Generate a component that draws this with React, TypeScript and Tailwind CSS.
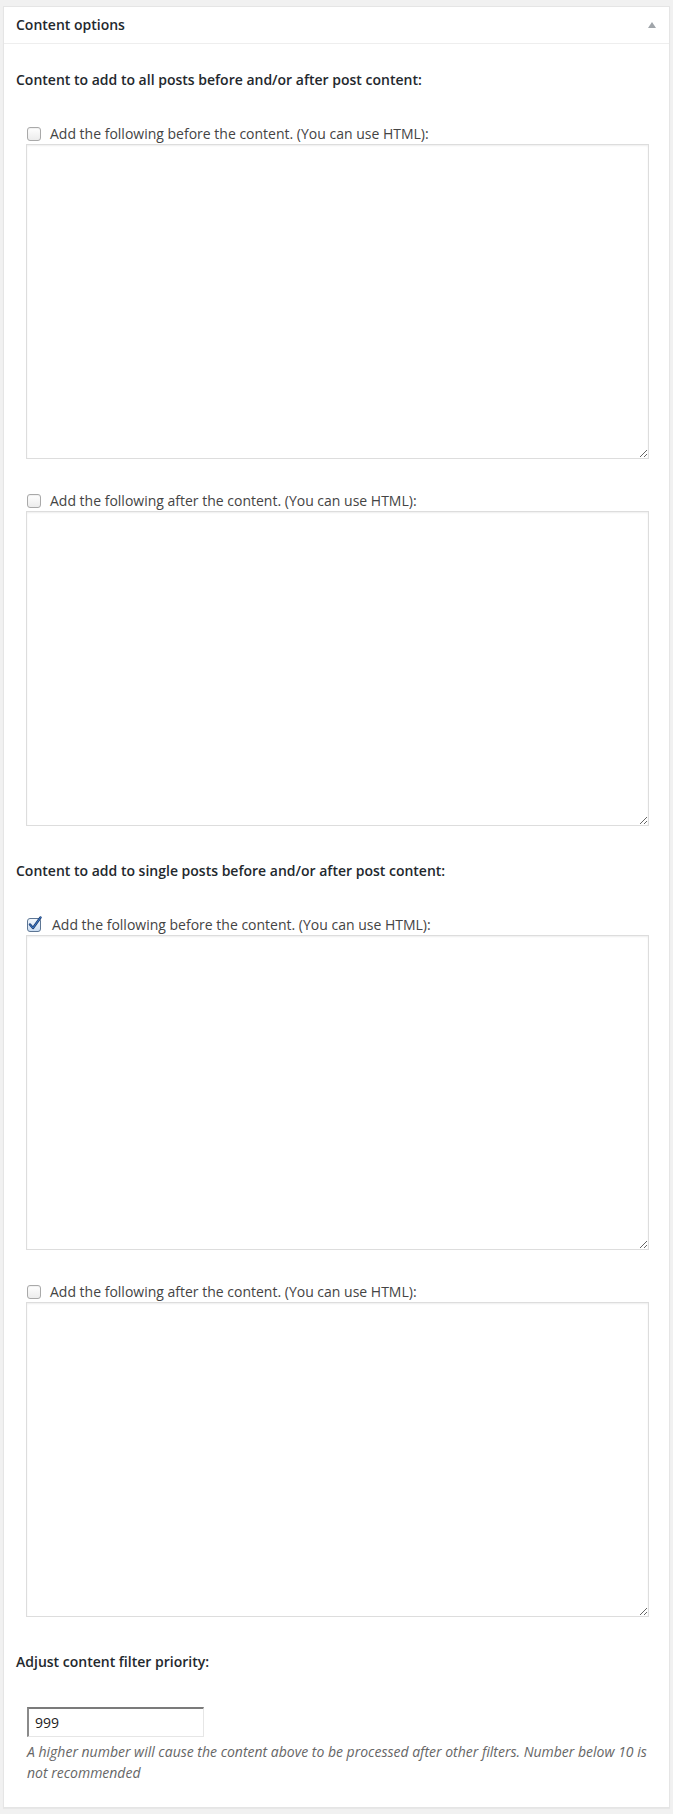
import React from "react";

type Field = { label: string; checked?: boolean };

const allPosts: Field[] = [
  { label: "Add the following before the content. (You can use HTML):" },
  { label: "Add the following after the content. (You can use HTML):" },
];

const singlePosts: Field[] = [
  { label: "Add the following before the content. (You can use HTML):", checked: true },
  { label: "Add the following after the content. (You can use HTML):" },
];

function Checkbox({ checked }: { checked?: boolean }) {
  if (checked) {
    return (
      <svg width="16" height="16" viewBox="0 0 16 16" className="-mt-[3px] shrink-0">
        <defs>
          <linearGradient id="cbfill" x1="0" y1="0" x2="0" y2="1">
            <stop offset="0" stopColor="#f4f8fd" />
            <stop offset="1" stopColor="#c9dcf2" />
          </linearGradient>
        </defs>
        <rect x="0.5" y="2.5" width="13" height="13" rx="2.5" fill="url(#cbfill)" stroke="#5d7694" />
        <path d="M3 8.5 L6 12 L13.5 1.5" fill="none" stroke="#1c3f75" strokeWidth="2.4" strokeLinecap="round" strokeLinejoin="round" />
        <path d="M3 8.5 L6 12 L13.5 1.5" fill="none" stroke="#3a78c9" strokeWidth="1" strokeLinecap="round" strokeLinejoin="round" />
      </svg>
    );
  }
  return (
    <span className="block h-[14px] w-[14px] shrink-0 rounded-[3px] border border-[#a9a9a9] bg-gradient-to-b from-white to-[#ececec] shadow-[inset_0_1px_1px_rgba(0,0,0,0.06)]" />
  );
}

function FieldBlock({ field, first }: { field: Field; first?: boolean }) {
  return (
    <div className={first ? "mt-[34px]" : "mt-[32px]"}>
      <label className="ml-[11px] flex h-[20px] items-center gap-[9px] text-[14px] leading-[20px] text-[#444]">
        <Checkbox checked={field.checked} />
        <span>{field.label}</span>
      </label>
      <textarea
        className="ml-[10px] block h-[315px] w-[623px] border border-[#ddd] bg-white shadow-[inset_0_1px_2px_rgba(0,0,0,0.07)] outline-none"
        defaultValue=""
      />
    </div>
  );
}

function SectionTitle({ children, className }: { children: React.ReactNode; className: string }) {
  return (
    <p className={`${className} text-[14px] font-semibold leading-[20px] text-[#23282d]`}>{children}</p>
  );
}

export default function App() {
  return (
    <div className="min-h-screen bg-[#f1f1f1] px-[3px] pb-[6px] pt-[6px] font-['Open_Sans',sans-serif]">
      <div className="border border-[#e5e5e5] bg-white shadow-[0_1px_1px_rgba(0,0,0,0.04)]">
        {/* Header */}
        <div className="flex h-[37px] items-center justify-between border-b border-[#eee] pl-3 pr-[13px]">
          <h2 className="text-[14px] font-semibold leading-[20px] text-[#23282d]">Content options</h2>
          <span className="block h-0 w-0 border-x-[4px] border-b-[6px] border-x-transparent border-b-[#a0a5aa]" />
        </div>

        <div className="px-3 pb-[24px]">
          {/* All posts */}
          <SectionTitle className="mt-[26px]">
            Content to add to all posts before and/or after post content:
          </SectionTitle>
          <FieldBlock field={allPosts[0]} first />
          <FieldBlock field={allPosts[1]} />

          {/* Single posts */}
          <SectionTitle className="mt-[35px]">
            Content to add to single posts before and/or after post content:
          </SectionTitle>
          <div className="mt-[1px]">
            <FieldBlock field={singlePosts[0]} first />
          </div>
          <FieldBlock field={singlePosts[1]} />

          {/* Priority */}
          <SectionTitle className="mt-[35px]">Adjust content filter priority:</SectionTitle>
          <input
            type="text"
            defaultValue="999"
            className="ml-[11px] mt-[35px] block h-[30px] w-[177px] border-b border-l-2 border-r border-t-2 border-b-[#e6e6e6] border-l-[#8a8a8a] border-r-[#e6e6e6] border-t-[#7b7b7b] bg-white px-[6px] text-[14px] text-[#222] outline-none"
          />
          <p className="ml-[11px] mt-[4px] w-[622px] text-[14px] italic leading-[21px] text-[#666]">
            A higher number will cause the content above to be processed after other filters. Number below 10 is not
            recommended
          </p>
        </div>
      </div>
    </div>
  );
}
